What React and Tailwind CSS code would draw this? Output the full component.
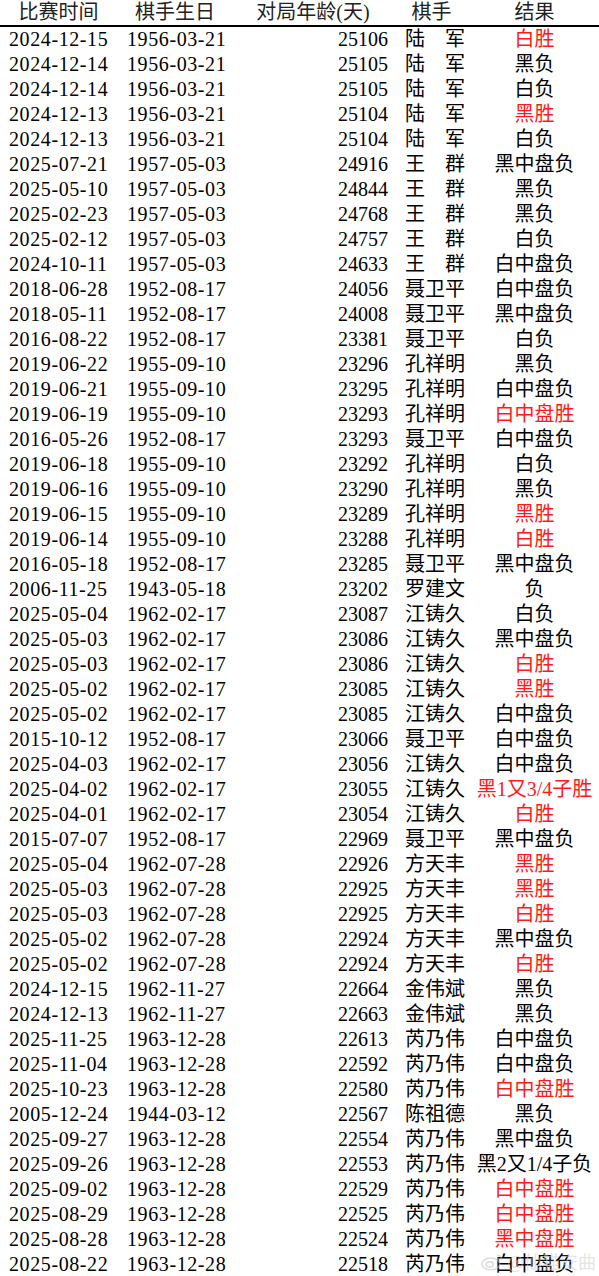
import React from 'react';

// [date, birthday, age, player, result, win]
const ROWS = [
  ['2024-12-15', '1956-03-21', '25106', '陆　军', '白胜', true],
  ['2024-12-14', '1956-03-21', '25105', '陆　军', '黑负'],
  ['2024-12-14', '1956-03-21', '25105', '陆　军', '白负'],
  ['2024-12-13', '1956-03-21', '25104', '陆　军', '黑胜', true],
  ['2024-12-13', '1956-03-21', '25104', '陆　军', '白负'],
  ['2025-07-21', '1957-05-03', '24916', '王　群', '黑中盘负'],
  ['2025-05-10', '1957-05-03', '24844', '王　群', '黑负'],
  ['2025-02-23', '1957-05-03', '24768', '王　群', '黑负'],
  ['2025-02-12', '1957-05-03', '24757', '王　群', '白负'],
  ['2024-10-11', '1957-05-03', '24633', '王　群', '白中盘负'],
  ['2018-06-28', '1952-08-17', '24056', '聂卫平', '白中盘负'],
  ['2018-05-11', '1952-08-17', '24008', '聂卫平', '黑中盘负'],
  ['2016-08-22', '1952-08-17', '23381', '聂卫平', '白负'],
  ['2019-06-22', '1955-09-10', '23296', '孔祥明', '黑负'],
  ['2019-06-21', '1955-09-10', '23295', '孔祥明', '白中盘负'],
  ['2019-06-19', '1955-09-10', '23293', '孔祥明', '白中盘胜', true],
  ['2016-05-26', '1952-08-17', '23293', '聂卫平', '白中盘负'],
  ['2019-06-18', '1955-09-10', '23292', '孔祥明', '白负'],
  ['2019-06-16', '1955-09-10', '23290', '孔祥明', '黑负'],
  ['2019-06-15', '1955-09-10', '23289', '孔祥明', '黑胜', true],
  ['2019-06-14', '1955-09-10', '23288', '孔祥明', '白胜', true],
  ['2016-05-18', '1952-08-17', '23285', '聂卫平', '黑中盘负'],
  ['2006-11-25', '1943-05-18', '23202', '罗建文', '负'],
  ['2025-05-04', '1962-02-17', '23087', '江铸久', '白负'],
  ['2025-05-03', '1962-02-17', '23086', '江铸久', '黑中盘负'],
  ['2025-05-03', '1962-02-17', '23086', '江铸久', '白胜', true],
  ['2025-05-02', '1962-02-17', '23085', '江铸久', '黑胜', true],
  ['2025-05-02', '1962-02-17', '23085', '江铸久', '白中盘负'],
  ['2015-10-12', '1952-08-17', '23066', '聂卫平', '白中盘负'],
  ['2025-04-03', '1962-02-17', '23056', '江铸久', '白中盘负'],
  ['2025-04-02', '1962-02-17', '23055', '江铸久', '黑1又3/4子胜', true],
  ['2025-04-01', '1962-02-17', '23054', '江铸久', '白胜', true],
  ['2015-07-07', '1952-08-17', '22969', '聂卫平', '黑中盘负'],
  ['2025-05-04', '1962-07-28', '22926', '方天丰', '黑胜', true],
  ['2025-05-03', '1962-07-28', '22925', '方天丰', '黑胜', true],
  ['2025-05-03', '1962-07-28', '22925', '方天丰', '白胜', true],
  ['2025-05-02', '1962-07-28', '22924', '方天丰', '黑中盘负'],
  ['2025-05-02', '1962-07-28', '22924', '方天丰', '白胜', true],
  ['2024-12-15', '1962-11-27', '22664', '金伟斌', '黑负'],
  ['2024-12-13', '1962-11-27', '22663', '金伟斌', '黑负'],
  ['2025-11-25', '1963-12-28', '22613', '芮乃伟', '白中盘负'],
  ['2025-11-04', '1963-12-28', '22592', '芮乃伟', '白中盘负'],
  ['2025-10-23', '1963-12-28', '22580', '芮乃伟', '白中盘胜', true],
  ['2005-12-24', '1944-03-12', '22567', '陈祖德', '黑负'],
  ['2025-09-27', '1963-12-28', '22554', '芮乃伟', '黑中盘负'],
  ['2025-09-26', '1963-12-28', '22553', '芮乃伟', '黑2又1/4子负'],
  ['2025-09-02', '1963-12-28', '22529', '芮乃伟', '白中盘胜', true],
  ['2025-08-29', '1963-12-28', '22525', '芮乃伟', '白中盘胜', true],
  ['2025-08-28', '1963-12-28', '22524', '芮乃伟', '黑中盘胜', true],
  ['2025-08-22', '1963-12-28', '22518', '芮乃伟', '白中盘负'],
];

const cols = 'grid grid-cols-[117px_116px_160px_77px_129px]';

export default function App() {
  return (
    <div
      className="relative w-[599px] bg-white text-black text-[20px] leading-[25px] overflow-hidden"
      style={{ fontFamily: '"Liberation Serif", "Noto Sans CJK SC", serif' }}
    >
      {/* header */}
      <div className={`${cols} h-[27px] border-b-2 border-black text-[#222]`}>
        <div className="text-center">比赛时间</div>
        <div className="text-center">棋手生日</div>
        <div className="text-center">对局年龄(天)</div>
        <div className="text-center">棋手</div>
        <div className="text-center">结果</div>
      </div>

      {/* rows */}
      {ROWS.map((r, i) => (
        <div key={i} className={`${cols} h-[25px] whitespace-nowrap`}>
          <div className="pl-[9px] tracking-[0.6px]">{r[0]}</div>
          <div className="pl-[10px] tracking-[0.6px]">{r[1]}</div>
          <div className="text-right pr-[5px]">{r[2]}</div>
          <div className="pl-[12px]">{r[3]}</div>
          <div className={`text-center ${r[5] ? 'text-[#ff1a1a]' : ''}`}>{r[4]}</div>
        </div>
      ))}

      {/* weibo watermark */}
      <div className="absolute left-[480px] bottom-[6px] flex items-center gap-[3px] text-[18px] leading-[20px] text-[#ccc] opacity-50 pointer-events-none">
        <svg width="24" height="19" viewBox="0 0 20 16" fill="none" stroke="#bbb" strokeWidth="1.3">
          <ellipse cx="9" cy="10" rx="7.5" ry="5" />
          <ellipse cx="8" cy="10.5" rx="3" ry="2.2" />
          <path d="M14 2.5a4 4 0 0 1 4 4" />
          <path d="M14 5a1.6 1.6 0 0 1 1.6 1.6" />
        </svg>
        <span style={{ fontFamily: '"Noto Sans CJK SC", sans-serif' }}>@仙猫安曲</span>
      </div>
    </div>
  );
}
